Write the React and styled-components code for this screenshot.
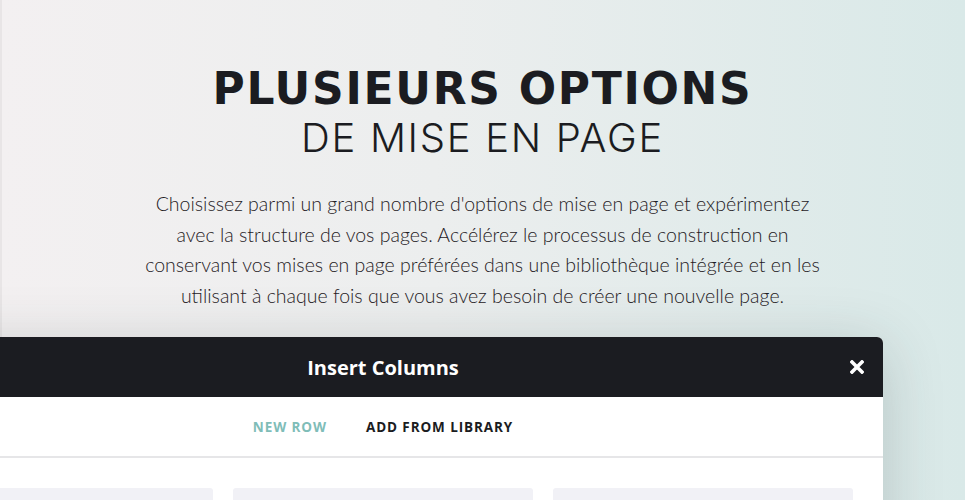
import React from 'react';
import styled, {createGlobalStyle} from 'styled-components';

const GlobalStyle = createGlobalStyle`
    html, body {
        margin: 0;
        padding: 0;
    }
    body {
        width: 965px;
        height: 500px;
        overflow: hidden;
        background: linear-gradient(90deg, #f3f0f1 0%, #eceeee 45%, #d9e9e8 100%);
    }
`;

const Page = styled.main`
    height: 500px;
    overflow: hidden;
    box-shadow: inset 2px 0 0 #e8e5e6;
`;

const Hero = styled.section`
    display: flex;
    flex-direction: column;
    align-items: center;
    padding-top: 63px;
    text-align: center;
`;

const Title = styled.h1`
    margin: 0;
    font-family: "DejaVu Sans", sans-serif;
    font-weight: 700;
    font-size: 44px;
    line-height: 52px;
    letter-spacing: 1.7px;
    color: #1b1c21;
`;

const Subtitle = styled.h2`
    margin: 0;
    font-family: Inter, sans-serif;
    font-weight: 300;
    font-size: 40px;
    line-height: 46px;
    letter-spacing: 1.7px;
    color: #1b1c21;
`;

const Lead = styled.p`
    margin: 28px 0 0;
    max-width: 690px;
    font-family: Lato, sans-serif;
    font-weight: 300;
    font-size: 19.5px;
    line-height: 30.5px;
    color: #1f2024;
`;

const Modal = styled.div`
    width: 1000px;
    margin: 26px 0 0 -117px;
    background: #fff;
    border-radius: 0 6px 0 0;
    box-shadow: 0 10px 60px rgba(40, 60, 60, 0.22);
    overflow: hidden;
`;

const ModalHeader = styled.header`
    position: relative;
    display: flex;
    align-items: center;
    justify-content: center;
    height: 60px;
    background: #1b1c21;
`;

const ModalTitle = styled.h3`
    margin: 0;
    font-family: "Open Sans", sans-serif;
    font-weight: 700;
    font-size: 20px;
    color: #fff;
`;

const CloseButton = styled.button`
    position: absolute;
    right: 19px;
    top: 50%;
    transform: translateY(-50%);
    display: flex;
    padding: 0;
    border: 0;
    background: none;
    cursor: pointer;
`;

const Tabs = styled.nav`
    display: flex;
    justify-content: center;
    gap: 39px;
    height: 59px;
    align-items: center;
    border-bottom: 2px solid #e6e6e8;
`;

const Tab = styled.span`
    font-family: "Open Sans", sans-serif;
    font-weight: 700;
    font-size: 13.5px;
    letter-spacing: 0.9px;
    text-transform: uppercase;
    color: ${p => (p.$active ? '#7fbdb8' : '#1b1c21')};
`;

const Cards = styled.div`
    display: grid;
    grid-template-columns: repeat(3, 300px);
    gap: 20px;
    padding: 30px 30px;
`;

const Card = styled.div`
    height: 120px;
    background: #f1f1f6;
    border-radius: 3px;
`;

const CloseIcon = () => (
    <svg width="14" height="14" viewBox="0 0 14 14">
        <path d="M2 2 L12 12 M12 2 L2 12" stroke="#fff" strokeWidth="3.6" strokeLinecap="square"/>
    </svg>
);

export default function App() {
    return <Page>
        <GlobalStyle/>
        <Hero>
            <Title>PLUSIEURS OPTIONS</Title>
            <Subtitle>DE MISE EN PAGE</Subtitle>
            <Lead>
                Choisissez parmi un grand nombre d'options de mise en page et expérimentez avec la structure de vos pages. Accélérez le processus de construction en conservant vos mises en page préférées dans une bibliothèque intégrée et en les utilisant à chaque fois que vous avez besoin de créer une nouvelle page.
            </Lead>
        </Hero>
        <Modal>
            <ModalHeader>
                <ModalTitle>Insert Columns</ModalTitle>
                <CloseButton aria-label="close"><CloseIcon/></CloseButton>
            </ModalHeader>
            <Tabs>
                <Tab $active>New Row</Tab>
                <Tab>Add From Library</Tab>
            </Tabs>
            <Cards>
                <Card/>
                <Card/>
                <Card/>
            </Cards>
        </Modal>
    </Page>;
}
